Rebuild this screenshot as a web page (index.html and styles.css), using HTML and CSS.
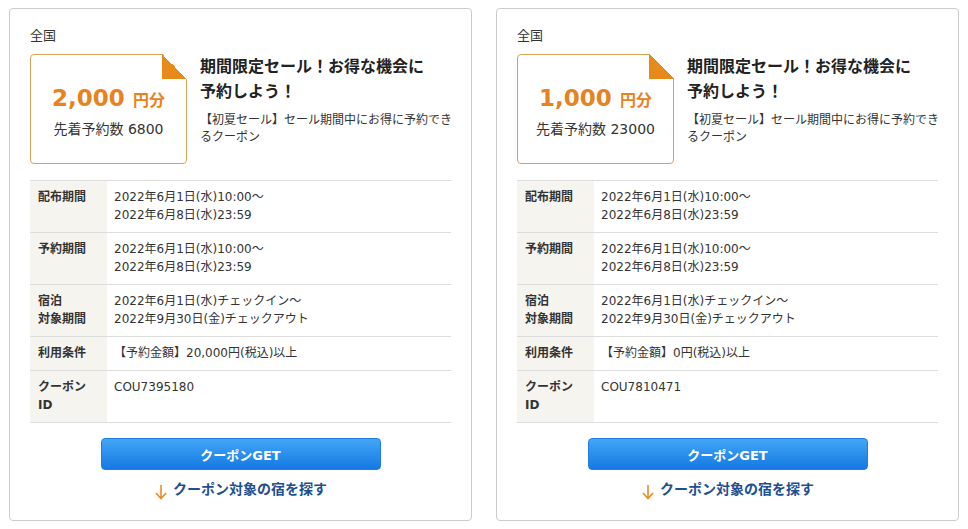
FILE: index.html
```html
<!DOCTYPE html>
<html lang="ja">
<head>
  <meta charset="UTF-8" />
  <title>クーポン一覧</title>
  <link rel="stylesheet" href="styles.css">
</head>
<body>

  <div class="coupons">

    <div class="card">
      <p class="area">全国</p>
      <div class="head">
        <div class="ticket">
          <p class="amount">2,000 <span>円分</span></p>
          <p class="count">先着予約数 6800</p>
        </div>
        <div class="info">
          <h3>期間限定セール！お得な機会に<br>予約しよう！</h3>
          <p>【初夏セール】セール期間中にお得に予約できるクーポン</p>
        </div>
      </div>
      <table class="terms">
        <tr>
          <th>配布期間</th>
          <td>2022年6月1日(水)10:00～<br>2022年6月8日(水)23:59</td>
        </tr>
        <tr>
          <th>予約期間</th>
          <td>2022年6月1日(水)10:00～<br>2022年6月8日(水)23:59</td>
        </tr>
        <tr>
          <th>宿泊<br>対象期間</th>
          <td>2022年6月1日(水)チェックイン～<br>2022年9月30日(金)チェックアウト</td>
        </tr>
        <tr>
          <th>利用条件</th>
          <td>【予約金額】20,000円(税込)以上</td>
        </tr>
        <tr>
          <th>クーポン<br>ID</th>
          <td>COU7395180</td>
        </tr>
      </table>
      <button class="get" type="button">クーポンGET</button>
      <a class="search" href="#">
        <svg width="14" height="16" viewBox="0 0 14 16"><path d="M7 1v13M2 9l5 5.5L12 9" fill="none" stroke="#ef8a22" stroke-width="1.6"/></svg>
        クーポン対象の宿を探す
      </a>
    </div>

    <div class="card">
      <p class="area">全国</p>
      <div class="head">
        <div class="ticket">
          <p class="amount">1,000 <span>円分</span></p>
          <p class="count">先着予約数 23000</p>
        </div>
        <div class="info">
          <h3>期間限定セール！お得な機会に<br>予約しよう！</h3>
          <p>【初夏セール】セール期間中にお得に予約できるクーポン</p>
        </div>
      </div>
      <table class="terms">
        <tr>
          <th>配布期間</th>
          <td>2022年6月1日(水)10:00～<br>2022年6月8日(水)23:59</td>
        </tr>
        <tr>
          <th>予約期間</th>
          <td>2022年6月1日(水)10:00～<br>2022年6月8日(水)23:59</td>
        </tr>
        <tr>
          <th>宿泊<br>対象期間</th>
          <td>2022年6月1日(水)チェックイン～<br>2022年9月30日(金)チェックアウト</td>
        </tr>
        <tr>
          <th>利用条件</th>
          <td>【予約金額】0円(税込)以上</td>
        </tr>
        <tr>
          <th>クーポン<br>ID</th>
          <td>COU7810471</td>
        </tr>
      </table>
      <button class="get" type="button">クーポンGET</button>
      <a class="search" href="#">
        <svg width="14" height="16" viewBox="0 0 14 16"><path d="M7 1v13M2 9l5 5.5L12 9" fill="none" stroke="#ef8a22" stroke-width="1.6"/></svg>
        クーポン対象の宿を探す
      </a>
    </div>

  </div>

</body>
</html>
```

FILE: styles.css
```css
body {
  margin: 0;
  background: #fff;
  font-family: "DejaVu Sans", "Noto Sans CJK JP", sans-serif;
  color: #333;
}
p, h3 {
  margin: 0;
}
.coupons {
  display: flex;
  gap: 24px;
  padding: 8px 0 0 9px;
}
.card {
  width: 421px;
  padding: 18px 20px 20px 20px;
  border: 1px solid #ccc;
  border-radius: 4px;
  display: flex;
  flex-direction: column;
  align-items: center;
}
.area {
  align-self: stretch;
  font-size: 13px;
  line-height: 18px;
  margin-bottom: 9px;
}
.head {
  align-self: stretch;
  display: flex;
  gap: 13px;
}
.ticket {
  position: relative;
  box-sizing: border-box;
  width: 157px;
  height: 110px;
  flex-shrink: 0;
  border: 1px solid #d9a356;
  border-radius: 4px;
  padding-top: 27px;
  text-align: center;
}
.ticket::after {
  content: "";
  position: absolute;
  top: -1px;
  right: -1px;
  width: 25px;
  height: 25px;
  background: linear-gradient(to bottom left, #fff 50%, #e8891c 50%);
}
.amount {
  color: #e8821e;
  font-size: 23px;
  font-weight: bold;
  line-height: 32px;
}
.amount span {
  font-size: 16px;
}
.count {
  font-size: 14px;
  line-height: 20px;
  margin-top: 2px;
}
.info {
  flex: 1;
  margin-right: -2px;
}
.info h3 {
  font-size: 16px;
  line-height: 25px;
  font-weight: bold;
  color: #222;
}
.info p {
  font-size: 12px;
  line-height: 17px;
  margin-top: 8px;
}
.terms {
  align-self: stretch;
  margin-top: 16px;
  border-collapse: collapse;
  font-size: 12px;
  line-height: 18px;
}
.terms tr {
  border-top: 1px solid #ddd;
  border-bottom: 1px solid #ddd;
}
.terms th {
  width: 62px;
  padding: 7px 7px 8px 8px;
  background: #f6f4ef;
  text-align: left;
  vertical-align: top;
  font-weight: bold;
}
.terms td {
  padding: 7px 7px 8px 7px;
  vertical-align: top;
}
.get {
  width: 280px;
  height: 32px;
  margin-top: 15px;
  border: 1px solid #1e7fe0;
  border-radius: 4px;
  background: linear-gradient(#43a6f6, #1479e2);
  color: #fff;
  font-family: inherit;
  font-size: 13px;
  font-weight: bold;
}
.search {
  display: flex;
  align-items: center;
  gap: 5px;
  margin-top: 8px;
  line-height: 22px;
  font-size: 14px;
  font-weight: bold;
  color: #1d4f91;
  text-decoration: none;
}
.search svg {
  margin-top: 6px;
}
```
